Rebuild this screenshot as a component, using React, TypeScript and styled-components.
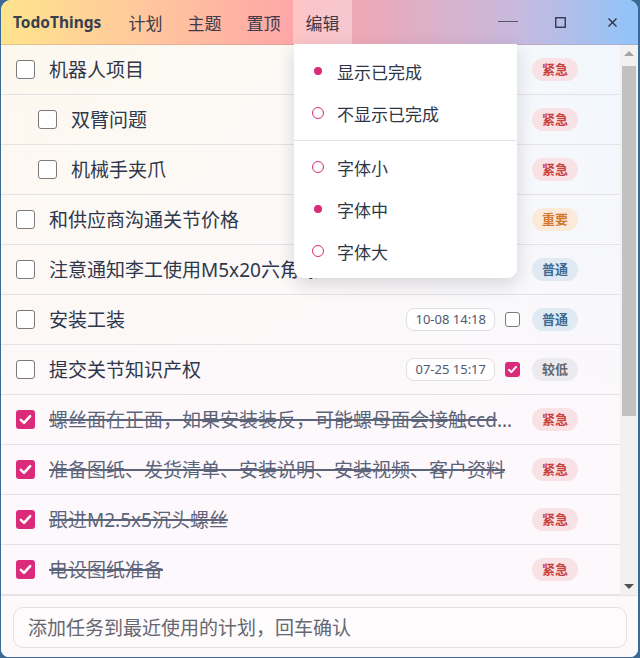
import React from "react";
import styled, { createGlobalStyle, css } from "styled-components";

type Priority = "urgent" | "important" | "normal" | "low";

interface Task {
  title: string;
  level?: number;
  done?: boolean;
  date?: string;
  dateDone?: boolean;
  priority: Priority;
}

const tasks: Task[] = [
  { title: "机器人项目", priority: "urgent" },
  { title: "双臂问题", level: 1, priority: "urgent" },
  { title: "机械手夹爪", level: 1, priority: "urgent" },
  { title: "和供应商沟通关节价格", priority: "important" },
  { title: "注意通知李工使用M5x20六角螺丝", priority: "normal" },
  { title: "安装工装", date: "10-08 14:18", priority: "normal" },
  { title: "提交关节知识产权", date: "07-25 15:17", dateDone: true, priority: "low" },
  { title: "螺丝面在正面，如果安装装反，可能螺母面会接触ccd相机镜头", done: true, priority: "urgent" },
  { title: "准备图纸、发货清单、安装说明、安装视频、客户资料", done: true, priority: "urgent" },
  { title: "跟进M2.5x5沉头螺丝", done: true, priority: "urgent" },
  { title: "电设图纸准备", done: true, priority: "urgent" },
];

const priorityLabel: Record<Priority, string> = {
  urgent: "紧急",
  important: "重要",
  normal: "普通",
  low: "较低",
};

const priorityColors: Record<Priority, { bg: string; fg: string }> = {
  urgent: { bg: "#f8e2e5", fg: "#c8413d" },
  important: { bg: "#fbe9da", fg: "#d2782c" },
  normal: { bg: "#e0eaf2", fg: "#3d6c92" },
  low: { bg: "#ebeaee", fg: "#66666e" },
};

const GlobalStyle = createGlobalStyle`
  html, body {
    margin: 0;
    padding: 0;
    background: #3b6a96;
  }
  body {
    font-family: "Noto Sans", "Noto Sans CJK SC", sans-serif;
  }
  * {
    box-sizing: border-box;
  }
`;

const Window = styled.div`
  position: relative;
  margin-left: 1px;
  width: 637px;
  height: 657px;
  display: flex;
  flex-direction: column;
  background: #fdf8fa;
  border-radius: 10px 10px 8px 8px;
  overflow: hidden;
`;

const TitleBar = styled.header`
  height: 45px;
  flex-shrink: 0;
  display: flex;
  align-items: stretch;
  background: linear-gradient(
    90deg,
    #fee48c 0%,
    #ffc89c 22%,
    #fea6a8 46%,
    #e8abbd 60%,
    #c5badf 82%,
    #90c4fa 100%
  );
  border-bottom: 1px solid rgba(190, 140, 130, 0.35);
`;

const Brand = styled.div`
  width: 115px;
  flex-shrink: 0;
  padding-left: 12px;
  display: flex;
  align-items: center;
  font-size: 15.5px;
  font-weight: 700;
  color: #373f50;
`;

const Nav = styled.nav`
  display: flex;
  align-items: stretch;
`;

const NavItem = styled.div<{ $active?: boolean }>`
  position: relative;
  width: 59px;
  display: flex;
  align-items: center;
  justify-content: center;
  font-size: 17px;
  color: #3e3a48;
  ${(p) =>
    p.$active &&
    css`
      background: rgba(255, 255, 255, 0.35);
    `}
`;

const Controls = styled.div`
  margin-left: auto;
  display: flex;
  align-items: stretch;
`;

const ControlButton = styled.div`
  width: 52px;
  display: flex;
  align-items: center;
  justify-content: center;
`;

const Dropdown = styled.div`
  position: absolute;
  top: 44px;
  left: 1px;
  width: 223px;
  padding: 6px 0 6px;
  background: #ffffff;
  border-radius: 0 0 9px 9px;
  box-shadow: 0 6px 18px rgba(40, 30, 50, 0.16);
  z-index: 10;
`;

const MenuItem = styled.div`
  height: 42px;
  display: flex;
  align-items: center;
  padding-left: 17px;
  font-size: 17px;
  color: #2f3646;
  white-space: nowrap;
`;

const RadioSlot = styled.span`
  width: 13px;
  height: 13px;
  margin-right: 13px;
  display: flex;
  align-items: center;
  justify-content: center;
`;

const RadioMark = styled.span<{ $on?: boolean }>`
  border-radius: 50%;
  ${(p) =>
    p.$on
      ? css`
          width: 8px;
          height: 8px;
          background: #dc2a78;
        `
      : css`
          width: 12px;
          height: 12px;
          border: 1.5px solid #dc2a78;
        `}
`;

const MenuDivider = styled.div`
  height: 1px;
  background: #e3e2e7;
  margin: 6px 0 5px;
`;

const Body = styled.div`
  flex: 1;
  display: flex;
  min-height: 0;
`;

const List = styled.div`
  flex: 1;
  min-width: 0;
  overflow: hidden;
  background: linear-gradient(
      180deg,
      rgba(253, 248, 251, 0) 0%,
      rgba(253, 248, 251, 0.55) 45%,
      #fdf8fb 72%
    ),
    linear-gradient(90deg, #fdf8ee 0%, #fbfaf6 50%, #f1f7fd 100%);
`;

const Row = styled.div<{ $level: number }>`
  height: 50px;
  display: flex;
  align-items: center;
  padding-left: ${(p) => 15 + p.$level * 22}px;
  padding-right: 42px;
  border-bottom: 1px solid #e5e2e6;
`;

const Box = styled.span<{ $checked?: boolean; $size: number }>`
  width: ${(p) => p.$size}px;
  height: ${(p) => p.$size}px;
  flex-shrink: 0;
  border-radius: 3px;
  display: flex;
  align-items: center;
  justify-content: center;
  ${(p) =>
    p.$checked
      ? css`
          background: #db2a79;
        `
      : css`
          background: #ffffff;
          border: 1.5px solid #7a7a7e;
        `}
`;

const Title = styled.span<{ $done?: boolean }>`
  flex: 1;
  min-width: 0;
  margin-left: 14px;
  font-size: 19px;
  line-height: 26px;
  white-space: nowrap;
  overflow: hidden;
  text-overflow: ellipsis;
  color: #2e374b;
  ${(p) =>
    p.$done &&
    css`
      color: #5c6479;
      text-decoration: line-through;
      text-decoration-thickness: 1.5px;
    `}
`;

const Meta = styled.div`
  display: flex;
  align-items: center;
  margin-left: 18px;
  flex-shrink: 0;
`;

const DatePill = styled.span`
  height: 23px;
  padding: 0 8px;
  border: 1px solid #e1dfe4;
  border-radius: 8px;
  background: #ffffff;
  font-size: 13px;
  line-height: 21px;
  color: #4f5870;
  margin-right: 10px;
`;

const SmallBoxSlot = styled.span`
  margin-right: 12px;
  display: flex;
`;

const Badge = styled.span<{ $priority: Priority }>`
  width: 46px;
  height: 23px;
  border-radius: 12px;
  font-size: 13px;
  font-weight: 600;
  line-height: 23px;
  text-align: center;
  background: ${(p) => priorityColors[p.$priority].bg};
  color: ${(p) => priorityColors[p.$priority].fg};
`;

const Scrollbar = styled.div`
  width: 18px;
  flex-shrink: 0;
  display: flex;
  flex-direction: column;
  background: #f1f1f1;
`;

const Arrow = styled.div<{ $down?: boolean }>`
  height: 17px;
  display: flex;
  align-items: center;
  justify-content: center;
  &::after {
    content: "";
    width: 0;
    height: 0;
    border-left: 5px solid transparent;
    border-right: 5px solid transparent;
    ${(p) =>
      p.$down
        ? css`
            border-top: 5px solid #505050;
          `
        : css`
            border-bottom: 5px solid #a3a3a3;
          `}
  }
`;

const Track = styled.div`
  flex: 1;
  padding: 4px 2px 0;
`;

const Thumb = styled.div`
  height: 350px;
  background: #c1c1c1;
`;

const Footer = styled.div`
  height: 62px;
  flex-shrink: 0;
  padding: 11px 11px 10px 12px;
  background: #fdf8fa;
  border-top: 1px solid #e6e2e6;
`;

const TaskInput = styled.input`
  width: 100%;
  height: 41px;
  padding: 0 14px;
  border: 1px solid #e3e0e4;
  border-radius: 10px;
  background: #fefbfc;
  font-family: "Noto Sans", "Noto Sans CJK SC", sans-serif;
  font-size: 19px;
  color: #2e374b;
  outline: none;
  &::placeholder {
    color: #66676f;
  }
`;

const Check: React.FC<{ size: number }> = ({ size }) => (
  <svg width={size} height={size} viewBox="0 0 16 16">
    <path
      d="M3.6 8.4 L6.6 11.2 L12.4 4.8"
      fill="none"
      stroke="#ffffff"
      strokeWidth="2.4"
      strokeLinecap="round"
      strokeLinejoin="round"
    />
  </svg>
);

const CheckBox: React.FC<{ checked?: boolean; size: number }> = ({ checked, size }) => (
  <Box $checked={checked} $size={size}>
    {checked && <Check size={size - 2} />}
  </Box>
);

const menuGroups = [
  [
    { label: "显示已完成", on: true },
    { label: "不显示已完成", on: false },
  ],
  [
    { label: "字体小", on: false },
    { label: "字体中", on: true },
    { label: "字体大", on: false },
  ],
];

const EditMenu: React.FC = () => (
  <Dropdown>
    {menuGroups.map((group, gi) => (
      <React.Fragment key={gi}>
        {gi > 0 && <MenuDivider />}
        {group.map((item) => (
          <MenuItem key={item.label}>
            <RadioSlot>
              <RadioMark $on={item.on} />
            </RadioSlot>
            {item.label}
          </MenuItem>
        ))}
      </React.Fragment>
    ))}
  </Dropdown>
);

export default function App() {
  return (
    <>
      <GlobalStyle />
      <Window>
        <TitleBar>
          <Brand>TodoThings</Brand>
          <Nav>
            <NavItem>计划</NavItem>
            <NavItem>主题</NavItem>
            <NavItem>置顶</NavItem>
            <NavItem $active>
              编辑
              <EditMenu />
            </NavItem>
          </Nav>
          <Controls>
            <ControlButton>
              <svg width="20" height="4" viewBox="0 0 20 4">
                <line x1="0" y1="1.5" x2="20" y2="1.5" stroke="#5a5a66" strokeWidth="1" />
              </svg>
            </ControlButton>
            <ControlButton>
              <svg width="11" height="11" viewBox="0 0 11 11">
                <rect x="0.75" y="0.75" width="9.5" height="9.5" fill="none" stroke="#2c2f3c" strokeWidth="1.3" />
              </svg>
            </ControlButton>
            <ControlButton>
              <svg width="9" height="9" viewBox="0 0 9 9">
                <path d="M0.5 0.5 L8.5 8.5 M8.5 0.5 L0.5 8.5" stroke="#2c2f3c" strokeWidth="1.3" />
              </svg>
            </ControlButton>
          </Controls>
        </TitleBar>

        <Body>
          <List>
            {tasks.map((t) => (
              <Row key={t.title} $level={t.level ?? 0}>
                <CheckBox checked={t.done} size={19} />
                <Title $done={t.done}>{t.title}</Title>
                <Meta>
                  {t.date && (
                    <>
                      <DatePill>{t.date}</DatePill>
                      <SmallBoxSlot>
                        <CheckBox checked={t.dateDone} size={15} />
                      </SmallBoxSlot>
                    </>
                  )}
                  <Badge $priority={t.priority}>{priorityLabel[t.priority]}</Badge>
                </Meta>
              </Row>
            ))}
          </List>
          <Scrollbar>
            <Arrow />
            <Track>
              <Thumb />
            </Track>
            <Arrow $down />
          </Scrollbar>
        </Body>

        <Footer>
          <TaskInput placeholder="添加任务到最近使用的计划，回车确认" />
        </Footer>
      </Window>
    </>
  );
}
